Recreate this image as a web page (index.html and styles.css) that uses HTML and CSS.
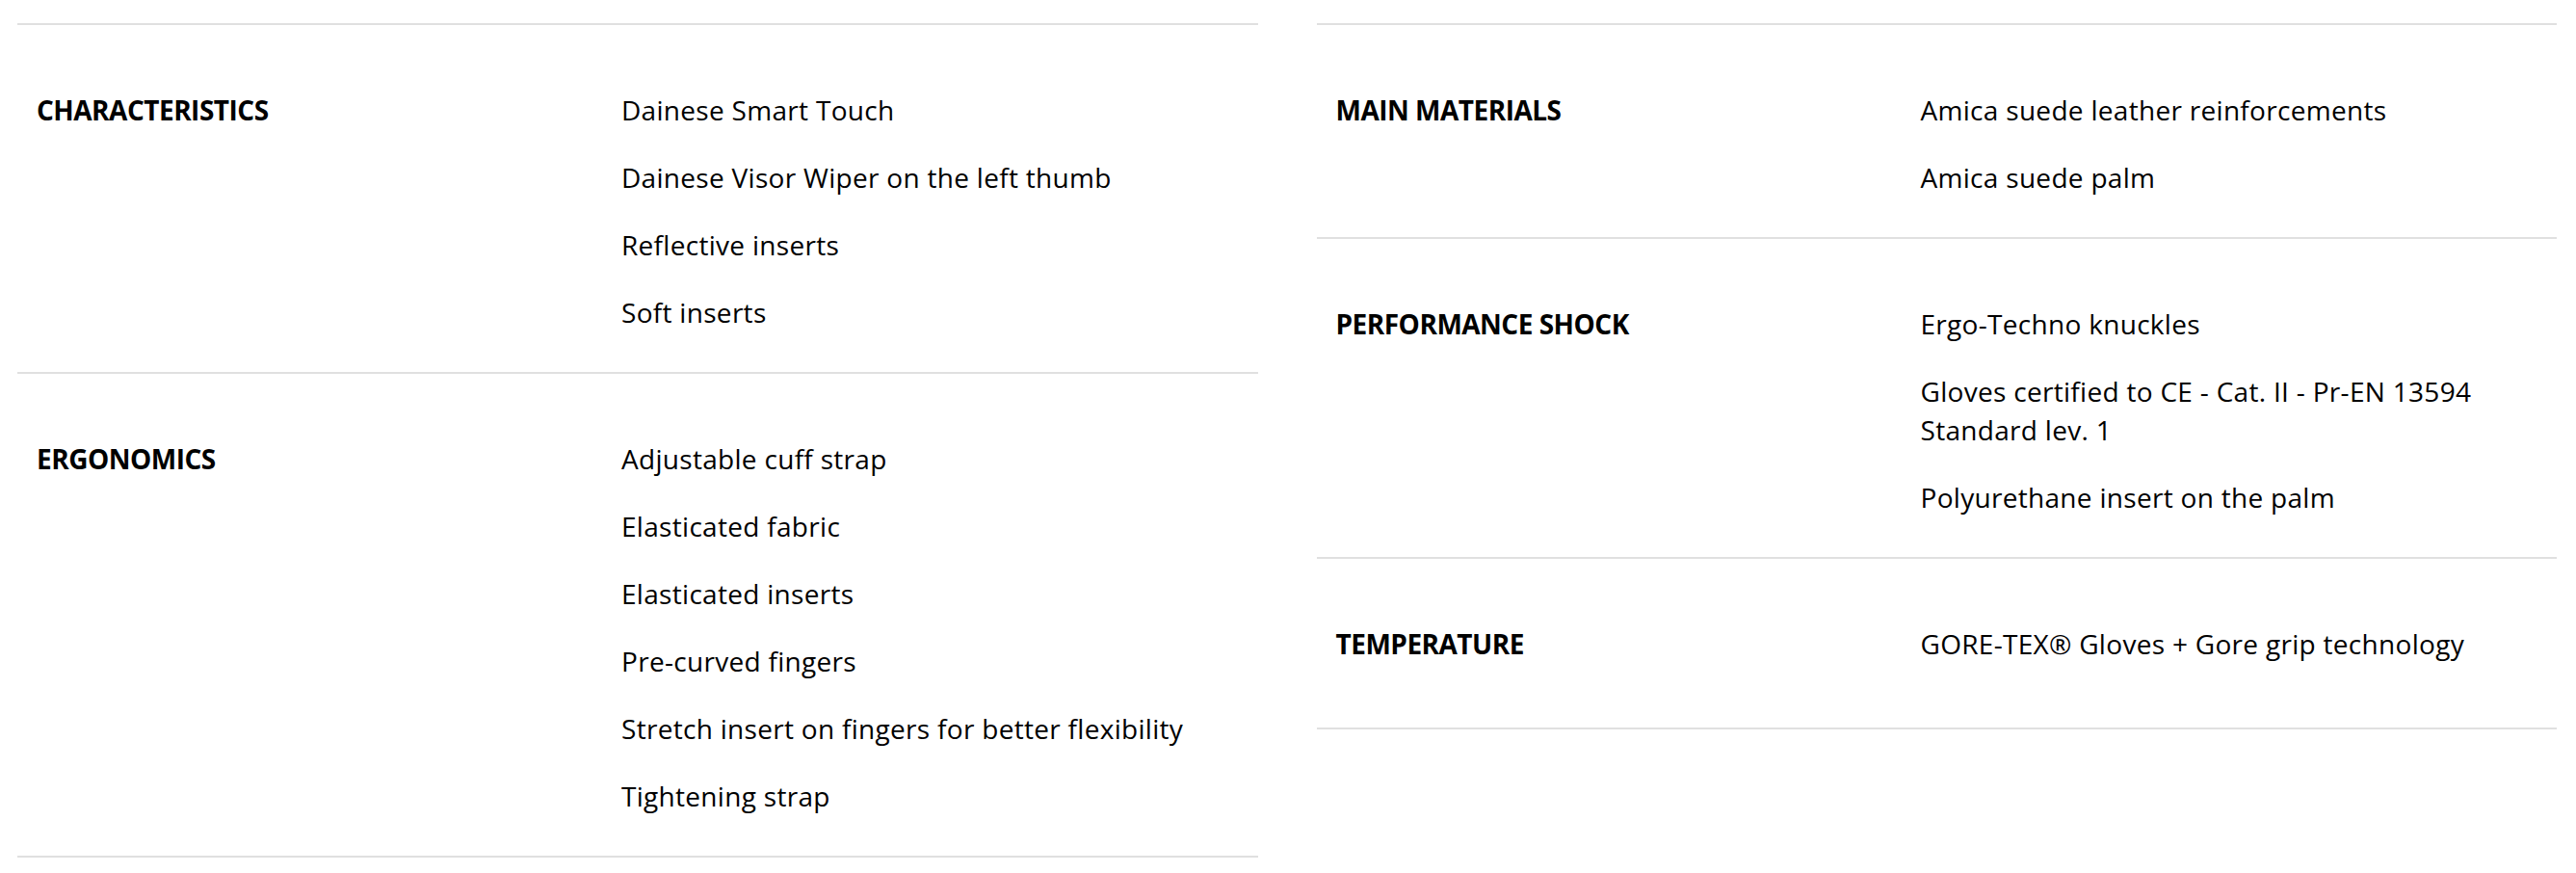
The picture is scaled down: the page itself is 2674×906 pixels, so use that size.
FILE: index.html
```html
<!DOCTYPE html>
<html lang="en">
<head>
<meta charset="utf-8">
<title>Specifications</title>
<link rel="stylesheet" href="styles.css">
</head>
<body>
<div class="specs">
  <div class="col">
    <section class="row">
      <h3 class="label">CHARACTERISTICS</h3>
      <ul class="values">
        <li>Dainese Smart Touch</li>
        <li>Dainese Visor Wiper on the left thumb</li>
        <li>Reflective inserts</li>
        <li>Soft inserts</li>
      </ul>
    </section>
    <section class="row">
      <h3 class="label">ERGONOMICS</h3>
      <ul class="values">
        <li>Adjustable cuff strap</li>
        <li>Elasticated fabric</li>
        <li>Elasticated inserts</li>
        <li>Pre-curved fingers</li>
        <li>Stretch insert on fingers for better flexibility</li>
        <li>Tightening strap</li>
      </ul>
    </section>
  </div>
  <div class="col">
    <section class="row">
      <h3 class="label">MAIN MATERIALS</h3>
      <ul class="values">
        <li>Amica suede leather reinforcements</li>
        <li>Amica suede palm</li>
      </ul>
    </section>
    <section class="row">
      <h3 class="label">PERFORMANCE SHOCK</h3>
      <ul class="values">
        <li>Ergo-Techno knuckles</li>
        <li>Gloves certified to CE - Cat. II - Pr-EN 13594 Standard lev. 1</li>
        <li>Polyurethane insert on the palm</li>
      </ul>
    </section>
    <section class="row">
      <h3 class="label">TEMPERATURE</h3>
      <ul class="values">
        <li>GORE-TEX® Gloves + Gore grip technology</li>
      </ul>
    </section>
  </div>
</div>
</body>
</html>
```
FILE: styles.css
```css
* { box-sizing: border-box; }
html, body { margin: 0; padding: 0; background: #fff; }
body {
  font-family: "Open Sans", "Noto Sans", "Liberation Sans", sans-serif;
  color: #000;
}
.specs {
  display: grid;
  grid-template-columns: 1fr 1fr;
  column-gap: 61px;
  padding: 24px 20px 0 18px;
  align-items: start;
}
.col {
  border-top: 2px solid #e0e0e0;
}
.row {
  display: grid;
  grid-template-columns: 627px 1fr;
  min-height: 177px;
  padding: 68px 0 42px 0;
  border-bottom: 2px solid #e0e0e0;
}
.label {
  margin: 0;
  padding-left: 20px;
  font-size: 28px;
  line-height: 40px;
  font-weight: 700;
  letter-spacing: -0.5px;
}
.values {
  list-style: none;
  margin: 0;
  padding: 0 40px 0 0;
  display: flex;
  flex-direction: column;
  gap: 30px;
  font-size: 28px;
  line-height: 40px;
  font-weight: 400;
  letter-spacing: 0.3px;
}
.values li { margin: 0; max-width: 600px; }
```
